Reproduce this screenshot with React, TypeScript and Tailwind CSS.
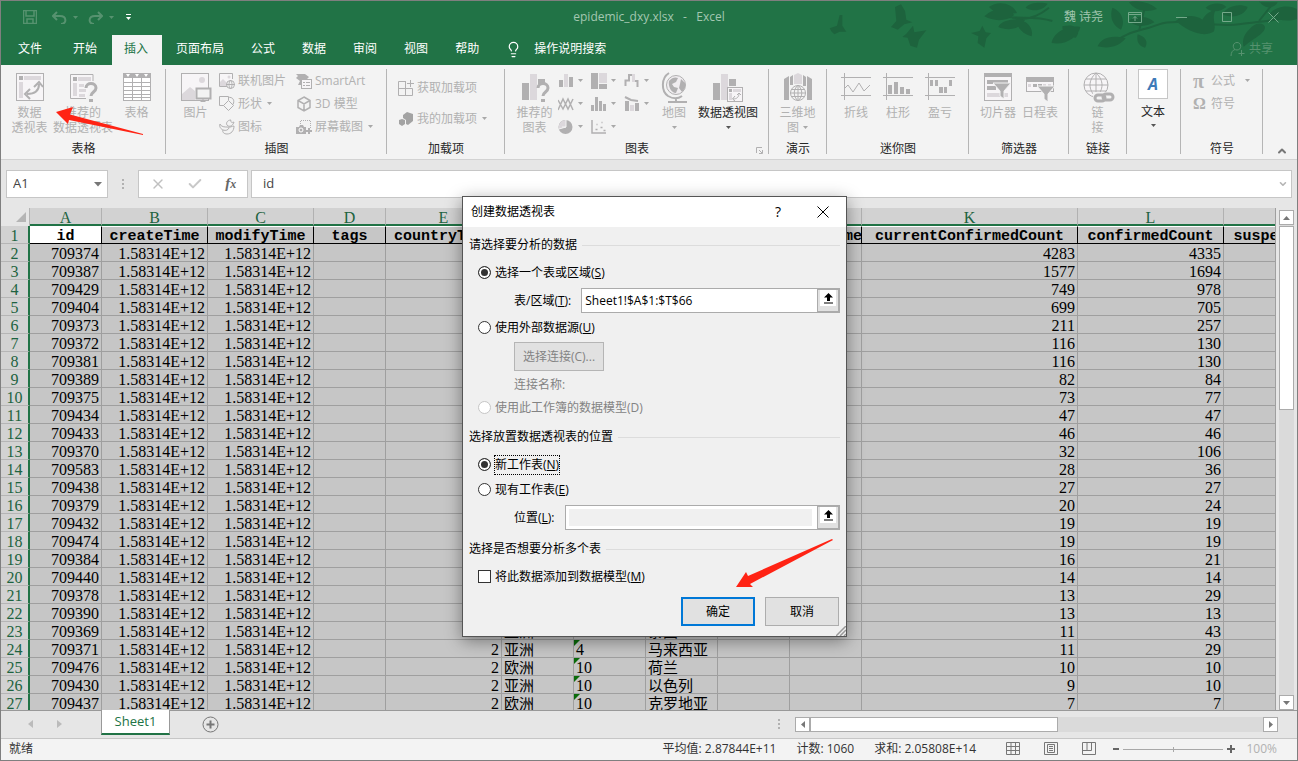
import type { ReactNode } from "react";
import { Check, ChevronDown, ChevronUp, Lightbulb, X } from "lucide-react";

const D = "#b1b0b1";
const L = "#dcd8dc";

const tabs = ["开始", "插入", "页面布局", "公式", "数据", "审阅", "视图", "帮助"];

const columns = [
  { letter: "A", title: "id", width: "w-[72px]" },
  { letter: "B", title: "createTime", width: "w-[106px]" },
  { letter: "C", title: "modifyTime", width: "w-[106px]" },
  { letter: "D", title: "tags", width: "w-[72px]" },
  { letter: "E", title: "countryType", width: "w-[116px]" },
  { title: "", width: "w-[72px]" },
  { title: "", width: "w-[72px]" },
  { title: "", width: "w-[72px]" },
  { title: "", width: "w-[72px]" },
  { title: "cityName", width: "w-[72px]" },
  { letter: "K", title: "currentConfirmedCount", width: "w-[216px]" },
  { letter: "L", title: "confirmedCount", width: "w-[146px]" },
  { title: "suspectedCount", width: "w-[146px]" },
];

type Row = {
  id: number;
  current: number;
  confirmed: number;
  place?: [string, string, string];
};

const rows: Row[] = [
  { id: 709374, current: 4283, confirmed: 4335 },
  { id: 709387, current: 1577, confirmed: 1694 },
  { id: 709429, current: 749, confirmed: 978 },
  { id: 709404, current: 699, confirmed: 705 },
  { id: 709373, current: 211, confirmed: 257 },
  { id: 709372, current: 116, confirmed: 130 },
  { id: 709381, current: 116, confirmed: 130 },
  { id: 709389, current: 82, confirmed: 84 },
  { id: 709375, current: 73, confirmed: 77 },
  { id: 709434, current: 47, confirmed: 47 },
  { id: 709433, current: 46, confirmed: 46 },
  { id: 709370, current: 32, confirmed: 106 },
  { id: 709583, current: 28, confirmed: 36 },
  { id: 709438, current: 27, confirmed: 27 },
  { id: 709379, current: 20, confirmed: 24 },
  { id: 709432, current: 19, confirmed: 19 },
  { id: 709474, current: 19, confirmed: 19 },
  { id: 709384, current: 16, confirmed: 21 },
  { id: 709440, current: 14, confirmed: 14 },
  { id: 709378, current: 13, confirmed: 29 },
  { id: 709390, current: 13, confirmed: 13 },
  { id: 709369, current: 11, confirmed: 43, place: ["亚洲", "8", "泰国"] },
  { id: 709371, current: 11, confirmed: 29, place: ["亚洲", "4", "马来西亚"] },
  { id: 709476, current: 10, confirmed: 10, place: ["欧洲", "10", "荷兰"] },
  { id: 709430, current: 9, confirmed: 10, place: ["亚洲", "10", "以色列"] },
  { id: 709437, current: 7, confirmed: 7, place: ["欧洲", "10", "克罗地亚"] },
];

function Caret({ className = "text-[#a8a8a8]" }: { className?: string }) {
  return (
    <svg width="5" height="3" viewBox="0 0 5 3" className={`shrink-0 ${className}`}>
      <path d="M0 0h5L2.5 3z" fill="currentColor" />
    </svg>
  );
}

function Svg({ w, h, children }: { w: number; h: number; children: ReactNode }) {
  return (
    <svg width={w} height={h} viewBox={`0 0 ${w} ${h}`} fill="none" className="shrink-0">
      {children}
    </svg>
  );
}

/* ---------- large ribbon icons, 30px high ---------- */

const PivotTableIcon = () => (
  <Svg w={30} h={30}>
    <rect x="1.5" y="1.5" width="27" height="27" stroke={D} fill="#f7f5f7" />
    <rect x="4" y="4" width="4" height="4" fill={D} />
    <rect x="9" y="4" width="17" height="4" fill={L} />
    <rect x="4" y="10" width="4" height="16" fill={L} />
    <path d="M12 22c8 0 12-3 12-10M15 17l-5 5 5 5M19 15l5-5 4 5" stroke={D} strokeWidth="2" />
  </Svg>
);

const RecommendPivotIcon = () => (
  <Svg w={30} h={30}>
    <path d="M25 9V2.500H2.500v24H18" stroke={D} fill="#f7f5f7" />
    <rect x="5" y="5" width="4" height="4" fill={D} />
    <rect x="10" y="5" width="13" height="4" fill={L} />
    <path d="M5 11h4v13H5zM11 12h5v3h-5zM11 17h7v3h-7zM11 22h6v3h-6z" fill={L} />
    <path d="M18 16c0-6 10-6 10 0 0 4-5 4-5 8" stroke={D} strokeWidth="3" />
    <rect x="21" y="27" width="4" height="3" fill={D} />
  </Svg>
);

const TableIcon = () => (
  <Svg w={30} h={30}>
    <rect x="1.500" y="1.500" width="27" height="27" stroke={D} fill="#fff" />
    <rect x="1" y="1" width="28" height="5" fill={D} />
    <path d="M4 2h4L6 5zM13 2h4l-2 3zM22 2h4l-2 3z" fill="#fff" />
    <path d="M1 10.500h28M1 14.500h28M1 18.500h28M1 22.500h28M1 25.500h28M10.500 6v23M19.500 6v23" stroke={D} />
  </Svg>
);

const PictureIcon = () => (
  <Svg w={32} h={32}>
    <rect x="1.500" y="1.500" width="27" height="27" stroke={D} fill="#f7f5f7" />
    <circle cx="22" cy="8" r="3" fill={L} />
    <path d="M2 28V22l8-7 5 4v9z" fill={L} />
    <rect x="16.500" y="16.500" width="14" height="10" stroke={D} strokeWidth="2" fill="#f3f3f3" />
    <path d="M20 30h6l-3-3z" fill={D} />
  </Svg>
);

const RecommendChartIcon = () => (
  <Svg w={30} h={30}>
    <path d="M2 11h7v17H2z" fill={D} />
    <path d="M10 2h7v26h-7z" fill={L} />
    <path d="M18 7h7v5h-7z" fill={D} />
    <path d="M18 16c0-6 10-6 10 0 0 4-5 4-5 8" stroke={D} strokeWidth="3" />
    <rect x="21" y="27" width="4" height="3" fill={D} />
  </Svg>
);

const MapIcon = () => (
  <Svg w={30} h={32}>
    <circle cx="17" cy="13" r="9.500" stroke={D} fill="#f0edf0" />
    <path d="M10 9c3-4 7-4 9-3l-2 4-4 2 2 3 4 1-2 5c-5 0-8-7-7-12zM22 7l4 4v5l-3 4-3-4 1-4z" fill={D} />
    <path d="M10 1C2 6 2 19 9 24c5 3 10 3 14 0M17 26v3M9 30h19" stroke={D} strokeWidth="2" />
  </Svg>
);

const PivotChartIcon = () => (
  <Svg w={32} h={30}>
    <path d="M1 11h7v17H1z" fill={D} />
    <path d="M9 2h7v26H9z" fill={L} />
    <path d="M17 7h7v7h-7z" fill={D} />
    <rect x="15.500" y="15.500" width="15" height="14" stroke={D} fill="#f7f5f7" />
    <path d="M17 17h3v3h-3z" fill={D} />
    <path d="M21 17h8v3h-8zM17 21h3v7h-3z" fill={L} />
    <path d="M21 27c4 0 6-2 6-6M23 24l-2.500 3 2.500 2M25 23l2-2 2 2" stroke={D} />
  </Svg>
);

const Map3dIcon = () => (
  <Svg w={30} h={30}>
    <path d="M1 7l5-3v24H1zM24 4l5 3v21h-5z" fill={D} />
    <path d="M7 5l3-2v10H7zM20 3l3 2v9h-3z" fill={D} />
    <path d="M11 3l4-2 4 2v9h-8z" fill={L} />
    <circle cx="15" cy="21" r="7.500" fill="#f3f3f3" stroke={D} />
    <path d="M7 21h16M8.500 17.500h13M8.500 24.500h13M15 13v16M15 13c-5 5-5 11 0 16M15 13c5 5 5 11 0 16" stroke={D} />
  </Svg>
);

const SparkLineIcon = () => (
  <Svg w={30} h={30}>
    <path d="M3.500 1v27M0 5.500h30M0 23.500h30" stroke={D} />
    <path d="M3 17l4-4 5 7 6-9 5 8 6-6" stroke={D} />
  </Svg>
);

const SparkColumnIcon = () => (
  <Svg w={30} h={30}>
    <path d="M3.500 1v27M0 5.500h30M0 23.500h30" stroke={D} />
    <path d="M5 13h4v9H5zM11 10h4v12h-4zM17 15h4v7h-4zM23 17h4v5h-4z" fill={D} />
  </Svg>
);

const SparkWinLossIcon = () => (
  <Svg w={30} h={30}>
    <path d="M3.500 1v27M0 5.500h30M0 23.500h30" stroke={D} />
    <path d="M5 8h3v6H5zM10 8h3v6h-3zM14 15h4v6h-4zM19 15h3v6h-3zM24 8h3v6h-3z" fill={D} />
  </Svg>
);

const SlicerIcon = () => (
  <Svg w={30} h={30}>
    <rect x="1.500" y="1.500" width="27" height="27" stroke={D} strokeWidth="1" fill="#f7f5f7" />
    <path d="M1 1h28v4H1zM4 8h21v4H4zM4 14h9v4H4z" fill={D} />
    <path d="M4 21h21v4H4z" fill={L} />
    <path d="M10 11h18l-7 8v8l-4-3v-5z" fill={D} stroke="#f3f3f3" />
  </Svg>
);

const TimelineIcon = () => (
  <Svg w={30} h={30}>
    <rect x="1.500" y="5.500" width="27" height="14" stroke={D} fill="#f7f5f7" />
    <path d="M1 5h28v5H1zM8 12h4v3H8zM13 12h4v3h-4z" fill={D} />
    <path d="M3 12h3v3H3zM18 12h3v3h-3zM23 12h3v3h-3z" fill={L} />
    <path d="M12 14h18l-7 8v8l-4-3v-5z" fill={D} stroke="#f3f3f3" />
  </Svg>
);

const LinkIcon = () => (
  <Svg w={34} h={32}>
    <circle cx="15" cy="13" r="12" stroke={D} fill="#f7f5f7" />
    <path d="M3 13h24M5 7h20M5 19h20M15 1v24M15 1c-8 7-8 17 0 24M15 1c8 7 8 17 0 24" stroke={D} />
    <path d="M12 20h22v12H12z" fill="#f3f3f3" />
    <rect x="14" y="23" width="10" height="6" rx="3" stroke={D} strokeWidth="3" />
    <rect x="22" y="22" width="10" height="6" rx="3" stroke={D} strokeWidth="3" />
  </Svg>
);

/* ---------- small ribbon icons, 16px ---------- */

const smallIcons: Record<string, ReactNode> = {
  online: (
    <>
      <path d="M8 13.500H.5v-13h13V6" stroke={D} fill="#f7f5f7" />
      <circle cx="10" cy="4" r="1.500" fill={L} />
      <path d="M1 13V9l3-3 4 4v3z" fill={L} />
      <circle cx="11.500" cy="11.500" r="4" stroke={D} fill="#f3f3f3" />
      <path d="M7 11.500h9M11.500 7c-2 3-2 6 0 9M11.500 7c2 3 2 6 0 9" stroke={D} />
    </>
  ),
  shapes: (
    <>
      <path d="M5 9.500H.5v-9h9V4" stroke={D} />
      <path d="M9 1.500c5-1 7 3 5 7" stroke={D} />
      <path d="M9.500 4.500l5 5-5 5-5-5z" stroke={D} fill="#f3f3f3" />
    </>
  ),
  icons: (
    <path
      d="M9 7c-3-2-1-6 3-6-1 2 1 3 3 2-1 3-3 5-6 4M1 5c1 3 5 3 7 3 3 1 5-1 7-1 0 5-3 8-7 8-3 0-5-2-4-4-2-1-4-3-3-6zM4 11c3 1 5 0 6-2"
      stroke={D}
    />
  ),
  smartart: (
    <>
      <path d="M0 1h9l4 3-3 3H5v5H2l2-4-4-3 2-2z" fill={D} />
      <rect x="5.500" y="6.500" width="10" height="9" stroke={D} fill="#f7f5f7" />
      <path d="M7 9.500h2M10 9.500h4M7 12.500h2M10 12.500h4" stroke={D} />
    </>
  ),
  cube: <path d="M8 1l6 3.500v7L8 15l-6-3.500v-7zM2 4.500L8 8l6-3.500M8 8v7" stroke={D} strokeWidth="1.500" />,
  screenshot: (
    <>
      <path d="M4.500 7V1.500h10V9" stroke={D} strokeDasharray="1 1" />
      <path d="M0 8h3l1-2h3l1 2h2v7H0z" fill={D} />
      <circle cx="5" cy="11" r="2" stroke="#fff" />
      <path d="M13 9v6M10 12h6" stroke={D} strokeWidth="2" />
    </>
  ),
  getAddins: <path d="M8 1.500H.5v14h14V8.500H.5M7.500 1.500v14M12.500 0v7M9 3.500h7" stroke={D} />,
  myAddins: (
    <>
      <path d="M5 4l4-3 6 2v7l-5 4-2-1V9L5 7z" fill="#a3a3a3" />
      <path d="M1 9l3-1 3 1v4l-3 2-3-2z" fill="#a3a3a3" />
    </>
  ),
  column: (
    <>
      <path d="M1 7h4v7H1zM11 4h4v10h-4z" fill={D} />
      <path d="M6 1h4v13H6z" fill={L} />
    </>
  ),
  treemap: (
    <>
      <path d="M0 0h7v16H0zM8 11h8v5H8z" fill={D} />
      <path d="M8 0h8v10H8z" fill={L} />
    </>
  ),
  waterfall: (
    <>
      <path d="M1.500 13V7.500H5V2h3M11 8h2.500v6" stroke={D} strokeWidth="2" />
      <path d="M8 1h3v8H8z" fill={L} />
    </>
  ),
  line: <path d="M0 14L5 3l5 10 5-10M0 4l5 9 5-10 5 11" stroke={D} strokeWidth="1.500" />,
  histogram: <path d="M0 9h3v6H0zM4 1h3v14H4zM8 5h3v10H8zM12 8h3v7h-3z" fill={D} />,
  combo: (
    <>
      <path d="M1 5h4v10H1zM11 7h4v8h-4z" fill={D} />
      <path d="M6 9h4v6H6z" fill={L} />
      <path d="M1 1l6 3 7 1" stroke={D} strokeWidth="2" />
    </>
  ),
  pie: (
    <>
      <circle cx="7.500" cy="8" r="7" fill={D} />
      <path d="M8 8V1a7 7 0 0 0-7 9z" fill={L} />
      <path d="M8 1v7L1 10M8 8h-4" stroke="#f3f3f3" />
    </>
  ),
  scatter: (
    <path
      d="M1 1v13h14M4.500 10.500h2M5.500 5.500h1M9.500 8.500h2M10.500 3.500h1M12.500 11.500h2"
      stroke={D}
      strokeWidth="1.500"
    />
  ),
};

function SmallIcon({ name }: { name: string }) {
  return (
    <Svg w={16} h={16}>
      {smallIcons[name]}
    </Svg>
  );
}

/* ---------- ribbon parts ---------- */

type GroupProps = { label: string; width: string; pad?: string; children: ReactNode };

function Group({ label, width, pad = "", children }: GroupProps) {
  return (
    <section className={`relative flex shrink-0 flex-col pt-1 ${width}`}>
      <div className={`flex h-[69px] shrink-0 items-start ${pad}`}>{children}</div>
      <h3 className="text-center leading-[21px] text-[#262626]">{label}</h3>
      <span className="absolute top-1 right-0 bottom-[5px] w-px bg-[#b5b5b5]" />
    </section>
  );
}

type BigProps = {
  icon: ReactNode;
  lines: string[];
  width: string;
  caret?: "inline" | "below";
  active?: boolean;
};

function BigButton({ icon, lines, width, caret, active }: BigProps) {
  return (
    <button
      type="button"
      className={`flex shrink-0 flex-col items-center pt-[3px] leading-[15px] whitespace-nowrap ${width} ${
        active ? "text-[#262626]" : "text-[#b1b1b1]"
      }`}
    >
      <span className="mb-[3px] flex h-[30px] items-start">{icon}</span>
      {lines.map((line, i) => (
        <span key={line} className="flex items-center gap-1">
          {line}
          {caret === "inline" && i === lines.length - 1 && <Caret />}
        </span>
      ))}
      {caret === "below" && (
        <span className="pt-[6px]">
          <Caret className={active ? "text-[#555]" : "text-[#a8a8a8]"} />
        </span>
      )}
    </button>
  );
}

function SmallButton({ icon, label, caret }: { icon: string; label: string; caret?: boolean }) {
  return (
    <button type="button" className="flex h-[23px] items-center gap-[3px] whitespace-nowrap text-[#b1b1b1]">
      <SmallIcon name={icon} />
      {label}
      {caret && <Caret className="ml-[2px] text-[#a8a8a8]" />}
    </button>
  );
}

function ChartButton({ icon }: { icon: string }) {
  return (
    <button type="button" aria-label={icon} className="flex h-[23px] items-center gap-1">
      <SmallIcon name={icon} />
      <Caret />
    </button>
  );
}

/* Birds and branches behind the window controls */
function TitleArt() {
  return (
    <svg
      className="pointer-events-none absolute top-0 right-0 h-[64px] w-[468px]"
      viewBox="0 0 1404 192"
      fill="#1d633d"
      stroke="none"
    >
      <path d="M2 82l22-8 8-32 8 0 0 32 12 18-20 0-16 8-8-8zM186 78l16-18-4-42 18-8 12 20 4 26 18 8-24 6-20 16-10-4zM232 98l20-24 4 20 36-6-22 28-6 24-20-6-8-24-16-2zM426 96l26-6 8-16 10 20 16 2-14 16-6 28-20-14 2-20z" />
      <path
        d="M480 40c80 20 130 0 190 20M500 20c50 50 110 40 160 0M850 130c40-40 90-40 140-60 60-20 160 10 240 0 70-10 120-10 174-30M1290 60l40-50M930 90l20-80"
        fill="none"
        stroke="#1d633d"
        strokeWidth="6"
      />
      <path d="M466 46c30-30 70-24 90-4-26 20-60 20-90 4zM480 18c24-20 70-14 84 18-34 6-64 4-84-18zM508 78c8-20 50-28 80-20-10 24-50 34-80 20zM560 50c24 4 56 26 48 56-28-8-44-24-48-56zM590 20c14-18 50-16 66-12-14 20-40 26-66 12zM668 126c4-30 46-56 86-48-6 30-44 56-86 48zM700 76c40-10 60 10 40 34-26 0-40-14-40-34zM806 136c10-24 40-36 84-24-20 26-54 32-84 24zM850 20c28 10 40 40 26 66-28-14-34-40-26-66zM900 60c20-20 60-14 76 4-26 14-54 16-76-4zM900 4c28-10 70 4 84 20-30 12-66 6-84-20zM926 100c20 6 34 20 22 40-20-6-26-20-22-40zM1040 60c20-18 60-20 80-4 10-18 20-24 40-30-14 30 4 44-6 66-34 20-80-4-114-32zM1130 20c18-16 50-16 62-2-20 16-42 18-62 2zM1180 40c10-22 50-36 76-22-10 26-46 36-76 22zM1262 84c14-20 42-22 46-6 0 22-40 36-64 60-6-20 2-40 18-54zM1320 40c20-24 56-30 84-16v30c-30 10-60 4-84-14zM1290 4h56c-10 20-40 22-56-4z" />
    </svg>
  );
}

function TitleBar() {
  return (
    <header className="relative h-16 shrink-0 bg-[#217346] text-white">
      <TitleArt />
      <div className="relative flex h-8 items-center justify-between pr-[18px] pl-[22px]">
        <div className="flex items-center text-[#56926f]">
          <Svg w={14} h={14}>
            <path d="M.5.500h13v13H.5zM3 1v5h8V1M4 13V9h6v4" stroke="#56926f" strokeWidth="1.500" />
          </Svg>
          <span className="ml-[15px] flex items-center gap-[6px]">
            <Svg w={15} h={13}>
              <path d="M5 1L1 5l4 4M1 5h7c7 0 7 8 1 8" stroke="#56926f" strokeWidth="2" />
            </Svg>
            <Caret className="text-[#56926f]" />
          </span>
          <span className="ml-[10px] flex items-center gap-[6px]">
            <Svg w={15} h={13}>
              <path d="M10 1l4 4-4 4M14 5H7C0 5 0 13 6 13" stroke="#56926f" strokeWidth="2" />
            </Svg>
            <Caret className="text-[#56926f]" />
          </span>
          <span className="ml-3 flex flex-col gap-[2px]">
            <span className="h-px w-[5px] bg-white" />
            <Caret className="text-white" />
          </span>
        </div>
        <div className="flex items-center text-[#a3c7b1]">
          <span>魏 诗尧</span>
          <button type="button" aria-label="功能区显示选项" className="ml-[25px]">
            <Svg w={14} h={11}>
              <path d="M.5.500h13v10H.5zM.5 2.500h13M7 9V4.500M5 6.500l2-2 2 2" stroke="#74a98a" />
            </Svg>
          </button>
          <button type="button" aria-label="最小化" className="ml-[34px]">
            <Svg w={11} h={11}>
              <path d="M0 5.500h11" stroke="#74a98a" />
            </Svg>
          </button>
          <button type="button" aria-label="最大化" className="ml-[35px]">
            <Svg w={11} h={11}>
              <path d="M.5.500h9v9h-9z" stroke="#74a98a" />
            </Svg>
          </button>
          <button type="button" aria-label="关闭" className="ml-[35px]">
            <Svg w={11} h={11}>
              <path d="M.5.500l10 10M10.500.500l-10 10" stroke="#74a98a" />
            </Svg>
          </button>
        </div>
        <h1 className="absolute inset-x-0 text-center whitespace-pre text-[#a3c7b1]">epidemic_dxy.xlsx   -   Excel</h1>
      </div>
      <nav className="relative flex h-8 items-end gap-px">
        <button type="button" className="h-[30px] px-[17px] pb-[2px]">
          文件
        </button>
        {tabs.map((tab) => (
          <button
            key={tab}
            type="button"
            className={`h-[30px] pb-[2px] ${
              tab === "插入" ? "ml-px bg-[#f3f3f3] pr-[14px] pl-3 text-[#217346]" : "px-[13px]"
            }`}
          >
            {tab}
          </button>
        ))}
        <button type="button" className="ml-3 flex h-[30px] items-center gap-3 pb-[2px]">
          <Lightbulb size={17} strokeWidth={1.75} />
          操作说明搜索
        </button>
        <button
          type="button"
          className="mr-6 ml-auto flex h-[30px] items-center gap-1 pb-[2px] text-[#56926f]"
        >
          <Svg w={15} h={16}>
            <path d="M1 15c0-4 2-6 4-6.500M7 1.500c-5 0-5 7.500 0 7.500s5-7.500 0-7.500M11.500 9v6M8.500 12.500h6" stroke="#56926f" />
          </Svg>
          共享
        </button>
      </nav>
    </header>
  );
}

function Ribbon() {
  return (
    <div className="flex h-[95px] shrink-0 border-b border-[#d2d2d2] bg-[#f3f3f3]">
      <Group label="表格" width="w-[165px]" pad="pl-[6px]">
        <BigButton icon={<PivotTableIcon />} lines={["数据", "透视表"]} width="w-[45px]" />
        <BigButton icon={<RecommendPivotIcon />} lines={["推荐的", "数据透视表"]} width="w-[62px]" />
        <BigButton icon={<TableIcon />} lines={["表格"]} width="w-[45px]" />
      </Group>
      <Group label="插图" width="w-[221px]" pad="pl-[6px]">
        <BigButton icon={<PictureIcon />} lines={["图片"]} width="w-[47px]" />
        <div className="w-[77px]">
          <SmallButton icon="online" label="联机图片" />
          <SmallButton icon="shapes" label="形状" caret />
          <SmallButton icon="icons" label="图标" />
        </div>
        <div>
          <SmallButton icon="smartart" label="SmartArt" />
          <SmallButton icon="cube" label="3D 模型" />
          <SmallButton icon="screenshot" label="屏幕截图" caret />
        </div>
      </Group>
      <Group label="加载项" width="w-[118px]" pad="pl-[11px]">
        <div className="flex flex-col gap-2 pt-[7px]">
          <SmallButton icon="getAddins" label="获取加载项" />
          <SmallButton icon="myAddins" label="我的加载项 " caret />
        </div>
      </Group>
      <Group label="图表" width="w-[264px]" pad="pl-[6px]">
        <BigButton icon={<RecommendChartIcon />} lines={["推荐的", "图表"]} width="w-[47px]" />
        <div className="grid grid-cols-[33px_33px_33px]">
          {["column", "treemap", "waterfall", "line", "histogram", "combo", "pie", "scatter"].map((icon) => (
            <ChartButton key={icon} icon={icon} />
          ))}
        </div>
        <BigButton icon={<MapIcon />} lines={["地图"]} width="w-[34px]" caret="below" />
        <BigButton icon={<PivotChartIcon />} lines={["数据透视图"]} width="w-[74px]" caret="below" active />
        <span className="absolute right-[6px] bottom-[5px]">
          <Svg w={7} h={7}>
            <path d="M.5 6V.500H6M3 3l3 3M6.500 3v3.500H3" stroke={D} />
          </Svg>
        </span>
      </Group>
      <Group label="演示" width="w-[58px]">
        <BigButton icon={<Map3dIcon />} lines={["三维地", "图"]} width="w-[57px]" caret="inline" />
      </Group>
      <Group label="迷你图" width="w-[142px]" pad="pl-2">
        <BigButton icon={<SparkLineIcon />} lines={["折线"]} width="w-[42px]" />
        <BigButton icon={<SparkColumnIcon />} lines={["柱形"]} width="w-[42px]" />
        <BigButton icon={<SparkWinLossIcon />} lines={["盈亏"]} width="w-[42px]" />
      </Group>
      <Group label="筛选器" width="w-[100px]" pad="pl-2">
        <BigButton icon={<SlicerIcon />} lines={["切片器"]} width="w-[42px]" />
        <BigButton icon={<TimelineIcon />} lines={["日程表"]} width="w-[42px]" />
      </Group>
      <Group label="链接" width="w-[58px]">
        <BigButton icon={<LinkIcon />} lines={["链", "接"]} width="w-[57px]" />
      </Group>
      <Group label="" width="w-[54px]">
        <button type="button" className="flex w-[52px] flex-col items-center leading-[15px] text-[#262626]">
          <span className="mb-[5px] flex h-[30px] w-[30px] items-center justify-center border border-[#c6c6c6] bg-white font-['Open_Sans'] text-base font-bold text-[#3d7ab8] italic">
            A
          </span>
          文本
          <span className="pt-[5px]">
            <Caret className="text-[#555]" />
          </span>
        </button>
      </Group>
      <Group label="符号" width="w-[82px]" pad="pl-3">
        <div className="text-[#b1b1b1]">
          <button type="button" className="flex h-[23px] items-center">
            <span className="w-[18px] text-left font-['Liberation_Serif'] text-xl font-bold">π</span>公式
            <Caret className="ml-[10px] text-[#a8a8a8]" />
          </button>
          <button type="button" className="flex h-[23px] items-center">
            <span className="w-[18px] text-left font-['Liberation_Serif'] text-base font-bold">Ω</span>符号
          </button>
        </div>
      </Group>
      <button type="button" aria-label="折叠功能区" className="ml-auto flex items-end pr-[9px] pb-[2px]">
        <ChevronUp size={12} strokeWidth={4} color="#777" />
      </button>
    </div>
  );
}

function FormulaBar() {
  return (
    <div className="flex h-12 shrink-0 items-start bg-[#e6e6e6] pt-[10px] pr-[5px] pl-[5px] text-[13px] text-[#444]">
      <div className="flex h-7 w-[102px] items-center border border-[#c6c6c6] bg-white pr-[5px]">
        <input aria-label="名称框" defaultValue="A1" className="w-full min-w-0 pl-[6px] outline-none" />
        <svg width="8" height="5" viewBox="0 0 8 5" className="shrink-0">
          <path d="M0 0h8L4 4.500z" fill="#777" />
        </svg>
      </div>
      <div className="flex h-7 w-[30px] flex-col items-center justify-center gap-[2px]">
        <span className="h-[2px] w-[2px] bg-[#b1b1b1]" />
        <span className="h-[2px] w-[2px] bg-[#b1b1b1]" />
        <span className="h-[2px] w-[2px] bg-[#b1b1b1]" />
      </div>
      <div className="flex h-7 w-[110px] items-center justify-around border border-[#c6c6c6] bg-white">
        <button type="button" aria-label="取消输入">
          <X size={16} color="#c0c0c0" />
        </button>
        <button type="button" aria-label="输入">
          <Check size={16} strokeWidth={3} color="#c8c8c8" />
        </button>
        <button type="button" className="font-['Liberation_Serif'] text-[15px] font-bold text-[#666] italic">
          f<span className="text-xs">x</span>
        </button>
      </div>
      <div className="ml-[3px] flex h-7 flex-1 items-center border border-[#c6c6c6] bg-white pr-[3px]">
        <input aria-label="编辑栏" defaultValue="id" className="w-full pl-[11px] outline-none" />
        <ChevronDown size={10} strokeWidth={4} color="#b5b5b5" />
      </div>
    </div>
  );
}

const cell =
  "relative h-[18px] overflow-hidden border-r border-b border-[#9f9f9f] px-[2px] pt-[3px] pb-0 leading-[14px] whitespace-nowrap";
const rowHead =
  "h-[18px] border-r-2 border-b border-r-[#217346] border-b-[#b5b5b5] bg-[#d2d2d2] px-0 pt-[3px] pb-0 text-center leading-[14px] font-normal text-[#1d6340]";

function Sheet() {
  return (
    <div className="flex min-h-0 flex-1 bg-[#e6e6e6]">
      <div className="min-w-0 flex-1 overflow-hidden border-r border-[#9f9f9f]">
        <table className="w-[1369px] table-fixed border-separate border-spacing-0 font-['Liberation_Serif','Noto_Sans_CJK_SC',serif] text-base text-black">
          <colgroup>
            <col className="w-[29px]" />
            {columns.map((c, i) => (
              <col key={i} className={c.width} />
            ))}
          </colgroup>
          <thead>
            <tr className="text-[#1d6340]">
              <td className="h-[18px] border-r border-[#b5b5b5] p-0">
                <svg width="10" height="10" viewBox="0 0 10 10" className="mr-[3px] ml-auto">
                  <path d="M10 0v10H0z" fill="#b5b5b5" />
                </svg>
              </td>
              {columns.map((c, i) => (
                <th
                  key={i}
                  className="h-[18px] border-r border-b-2 border-r-[#b1b1b1] border-b-[#217346] bg-[#d2d2d2] px-0 pt-[3px] pb-0 leading-[13px] font-normal"
                >
                  {c.letter}
                </th>
              ))}
            </tr>
          </thead>
          <tbody>
            <tr>
              <th className={rowHead}>1</th>
              {columns.map((c, i) => (
                <td
                  key={i}
                  className={`h-[18px] overflow-hidden border-t border-r border-b border-t-white border-r-black border-b-black px-0 pt-1 pb-0 text-center font-['Liberation_Mono'] text-[15px] leading-3 font-bold whitespace-nowrap ${
                    i === 0 ? "bg-white" : "bg-[#c6c6c6]"
                  }`}
                >
                  {c.title}
                </td>
              ))}
            </tr>
            {rows.map((row, i) => (
              <tr key={row.id} className="bg-[#c6c6c6] text-right">
                <th className={rowHead}>{i + 2}</th>
                <td className={cell}>{row.id}</td>
                <td className={cell}>1.58314E+12</td>
                <td className={cell}>1.58314E+12</td>
                <td className={cell} />
                <td className={cell}>{row.place ? 2 : ""}</td>
                <td className={`${cell} text-left text-[15px]`}>{row.place?.[0]}</td>
                <td className={`${cell} text-left`}>
                  {row.place && (
                    <span className="absolute top-0 left-0 border-t-[6px] border-r-[6px] border-t-[#0a6b0a] border-r-transparent" />
                  )}
                  {row.place?.[1]}
                </td>
                <td className={`${cell} text-left text-[15px]`}>{row.place?.[2]}</td>
                <td className={cell} />
                <td className={cell} />
                <td className={cell}>{row.current}</td>
                <td className={cell}>{row.confirmed}</td>
                <td className={cell} />
              </tr>
            ))}
          </tbody>
        </table>
      </div>
      <div className="mt-[2px] mr-[3px] ml-[3px] flex w-[15px] flex-col bg-[#dadada]">
        <button
          type="button"
          aria-label="向上滚动"
          className="flex h-[15px] items-center justify-center border border-[#ababab] bg-white"
        >
          <svg width="7" height="4" viewBox="0 0 7 4">
            <path d="M0 4h7L3.500 0z" fill="#777" />
          </svg>
        </button>
        <div className="mt-px h-[184px] border border-[#ababab] bg-white" />
        <button
          type="button"
          aria-label="向下滚动"
          className="mt-auto flex h-[15px] items-center justify-center border border-[#ababab] bg-white"
        >
          <svg width="7" height="4" viewBox="0 0 7 4">
            <path d="M0 0h7L3.500 4z" fill="#777" />
          </svg>
        </button>
      </div>
    </div>
  );
}

function SheetTabs() {
  return (
    <div className="flex h-7 shrink-0 items-start border-t border-[#999] bg-[#e6e6e6] pr-[19px]">
      <div className="flex h-[26px] w-[100px] items-center gap-6 pl-[27px]">
        <svg width="5" height="8" viewBox="0 0 5 8">
          <path d="M5 0v8L0 4z" fill="#bbb" />
        </svg>
        <svg width="5" height="8" viewBox="0 0 5 8">
          <path d="M0 0v8l5-4z" fill="#bbb" />
        </svg>
      </div>
      <button
        type="button"
        className="-mt-px h-[25px] w-[69px] border-r border-b-2 border-l border-x-[#999] border-b-[#217346] bg-white text-[13px] text-[#217346]"
      >
        Sheet1
      </button>
      <button type="button" aria-label="新工作表" className="mt-[5px] ml-8">
        <Svg w={17} h={17}>
          <circle cx="8.500" cy="8.500" r="7.500" stroke="#777" />
          <path d="M8.500 4.500v8M4.500 8.500h8" stroke="#777" strokeWidth="2" />
        </Svg>
      </button>
      <div className="mt-[8px] ml-auto flex flex-col gap-[2px]">
        <span className="h-[2px] w-[2px] bg-[#b1b1b1]" />
        <span className="h-[2px] w-[2px] bg-[#b1b1b1]" />
        <span className="h-[2px] w-[2px] bg-[#b1b1b1]" />
      </div>
      <div className="mt-[6px] ml-[15px] flex h-[15px] w-[483px] bg-[#dadada]">
        <button
          type="button"
          aria-label="向左滚动"
          className="flex w-[15px] items-center justify-center border border-[#ababab] bg-white"
        >
          <svg width="4" height="7" viewBox="0 0 4 7">
            <path d="M4 0v7L0 3.500z" fill="#777" />
          </svg>
        </button>
        <div className="w-[248px] border border-[#ababab] bg-white" />
        <button
          type="button"
          aria-label="向右滚动"
          className="ml-auto flex w-[15px] items-center justify-center border border-[#ababab] bg-white"
        >
          <svg width="4" height="7" viewBox="0 0 4 7">
            <path d="M0 0v7l4-3.500z" fill="#777" />
          </svg>
        </button>
      </div>
    </div>
  );
}

function StatusBar() {
  return (
    <footer className="flex h-[22px] shrink-0 items-center border-t border-[#c6c6c6] bg-[#f3f3f3] pr-5 pb-px pl-2 text-[#333]">
      <span>就绪</span>
      <div className="mr-[30px] ml-auto flex gap-5">
        <span>平均值: 2.87844E+11</span>
        <span>计数: 1060</span>
        <span>求和: 2.05808E+14</span>
      </div>
      <div className="flex gap-6">
        <button type="button" aria-label="普通">
          <Svg w={14} h={14}>
            <path d="M.5.500h13v12H.5zM.5 4.500h13M.5 8.500h13M5 .500v12M9.500.500v12" stroke="#777" />
          </Svg>
        </button>
        <button type="button" aria-label="页面布局">
          <Svg w={14} h={14}>
            <path d="M.5.500h13v12H.5zM3.500 2.500h7v8h-7zM5 4.500h4M5 6.500h4M5 8.500h4" stroke="#777" />
          </Svg>
        </button>
        <button type="button" aria-label="分页预览">
          <Svg w={14} h={14}>
            <path d="M.5.500h13v12H.5zM.5 8.500h9V.500M5 .500v8" stroke="#777" />
          </Svg>
        </button>
      </div>
      <button type="button" aria-label="缩小" className="ml-[17px] h-[2px] w-[6px] bg-[#666]" />
      <input
        type="range"
        aria-label="缩放"
        disabled
        className="mx-1 h-[5px] w-[100px] appearance-none bg-[linear-gradient(#a8a8a8,#a8a8a8)] bg-[length:100%_1px] bg-center bg-no-repeat [&::-webkit-slider-thumb]:h-[5px] [&::-webkit-slider-thumb]:w-px [&::-webkit-slider-thumb]:appearance-none [&::-webkit-slider-thumb]:bg-[#a8a8a8]"
      />
      <button type="button" aria-label="放大">
        <Svg w={8} h={8}>
          <path d="M4 0v8M0 4h8" stroke="#666" strokeWidth="2" />
        </Svg>
      </button>
      <span className="w-[42px] text-right text-[#b1b1b1]">100%</span>
    </footer>
  );
}

/* ---------- dialog ---------- */

function Section({ title }: { title: string }) {
  return (
    <h3 className="mt-[10px] flex h-[18px] items-center gap-[5px] first:mt-[9px] after:h-px after:flex-1 after:bg-[#dcdcdc]">
      {title}
    </h3>
  );
}

type ChoiceProps = {
  name: string;
  label: string;
  hotkey: string;
  checked?: boolean;
  disabled?: boolean;
  focused?: boolean;
  className: string;
};

function Choice({ name, label, hotkey, checked, disabled, focused, className }: ChoiceProps) {
  return (
    <label className={`flex h-5 items-center pl-[9px] ${disabled ? "text-[#838383]" : ""} ${className}`}>
      <input
        type="radio"
        name={name}
        defaultChecked={checked}
        disabled={disabled}
        className="mr-[3px] mb-[2px] h-[13px] w-[13px] shrink-0 appearance-none rounded-full border border-[#333] bg-white checked:bg-[#333] checked:shadow-[inset_0_0_0_2px_white] disabled:border-[#c6c6c6]"
      />
      <span className={`border border-dotted leading-[18px] ${focused ? "border-black" : "border-transparent"}`}>
        {label}({disabled ? hotkey : <u>{hotkey}</u>})
      </span>
    </label>
  );
}

function RangeField({ id, label, hotkey, value }: { id: string; label: string; hotkey: string; value?: string }) {
  return (
    <div className="mt-[5px] flex h-[25px] items-center pl-[45px]">
      <label htmlFor={id} className="mr-[10px]">
        {label}(<u>{hotkey}</u>):
      </label>
      <div className="flex h-full min-w-0 flex-1 border border-[#ababab] bg-white">
        <div className="flex min-w-0 flex-1 p-[3px] pr-[5px]">
          <input
            id={id}
            defaultValue={value}
            disabled={!value}
            className="w-full min-w-0 outline-none disabled:bg-[#f0f0f0]"
          />
        </div>
        <button
          type="button"
          aria-label="折叠对话框"
          className="flex w-[22px] justify-center border border-[#ababab] bg-[#e1e1e1]"
        >
          <span className="flex h-4 w-4 items-center justify-center bg-white">
            <Svg w={9} h={11}>
              <path d="M4.500 0L9 4.500H6V8H3V4.500H0zM0 9.500h9v1H0z" fill="#000" />
            </Svg>
          </span>
        </button>
      </div>
    </div>
  );
}

function PivotDialog() {
  return (
    <div
      role="dialog"
      aria-label="创建数据透视表"
      className="absolute top-[195px] left-[461px] w-[385px] border border-[#555] bg-[#f0f0f0] text-black shadow-[0_4px_16px_rgba(0,0,0,0.4)]"
    >
      <div className="flex h-[30px] items-center bg-white pr-[17px] pl-2">
        <h2>创建数据透视表</h2>
        <button type="button" aria-label="帮助" className="mr-9 ml-auto text-sm">
          ?
        </button>
        <button type="button" aria-label="关闭">
          <Svg w={12} h={12}>
            <path d="M.5.500l11 11M11.500.500l-11 11" stroke="#000" />
          </Svg>
        </button>
      </div>
      <form className="px-[6px] pb-[10px]">
        <Section title="请选择要分析的数据" />
        <Choice name="source" label="选择一个表或区域" hotkey="S" checked className="mt-[9px]" />
        <RangeField id="range" label="表/区域" hotkey="T" value="Sheet1!$A$1:$T$66" />
        <Choice name="source" label="使用外部数据源" hotkey="U" className="mt-[5px]" />
        <button
          type="button"
          disabled
          className="mt-1 ml-[45px] block h-[29px] w-[90px] border border-[#b5b5b5] bg-[#e1e1e1] text-[#838383]"
        >
          选择连接(C)...
        </button>
        <p className="mt-[5px] h-[18px] pl-[45px] leading-[18px] text-[#838383]">连接名称:</p>
        <Choice name="source" label="使用此工作簿的数据模型" hotkey="D" disabled className="mt-1" />
        <Section title="选择放置数据透视表的位置" />
        <Choice name="target" label="新工作表" hotkey="N" checked focused className="mt-[9px]" />
        <Choice name="target" label="现有工作表" hotkey="E" className="mt-[5px]" />
        <RangeField id="location" label="位置" hotkey="L" />
        <Section title="选择是否想要分析多个表" />
        <label className="mt-[9px] flex h-5 items-center gap-1 pl-[9px]">
          <input
            type="checkbox"
            className="mb-[2px] h-[13px] w-[13px] shrink-0 appearance-none border border-[#333] bg-white"
          />
          <span>
            将此数据添加到数据模型(<u>M</u>)
          </span>
        </label>
        <div className="mt-[10px] flex justify-end gap-[10px] pr-px">
          <button type="button" className="h-[29px] w-[74px] border-2 border-[#0078d7] bg-[#e1e1e1]">
            确定
          </button>
          <button type="button" className="h-[29px] w-[74px] border border-[#adadad] bg-[#e1e1e1]">
            取消
          </button>
        </div>
      </form>
      <svg width="10" height="10" viewBox="0 0 10 10" className="absolute right-0 bottom-0">
        <path d="M0 10L10 0M4 10l6-6M8 10l2-2" stroke="#999" strokeWidth="1.500" />
      </svg>
    </div>
  );
}

export default function App() {
  return (
    <div className="relative flex h-screen flex-col overflow-hidden border border-[#7f7f7f] font-['Open_Sans','Noto_Sans_CJK_SC',sans-serif] text-xs">
      <TitleBar />
      <Ribbon />
      <FormulaBar />
      <Sheet />
      <SheetTabs />
      <StatusBar />
      <PivotDialog />
      <svg width="90" height="30" viewBox="0 0 90 30" className="absolute top-[105px] left-[55px]">
        <path d="M0 6L17 1 14 8.500 87 28v1L13 14l-1 4z" fill="#ff2314" />
      </svg>
      <svg width="100" height="50" viewBox="0 0 100 50" className="absolute top-[537px] left-[735px]">
        <path d="M0 49L10 34l2 4L96 1l1 1L14 46l3 3z" fill="#ff2314" />
      </svg>
    </div>
  );
}
